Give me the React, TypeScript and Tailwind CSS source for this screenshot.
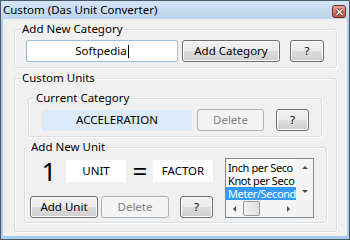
import React from "react";

function Button({
  children,
  className = "",
  disabled = false,
}: {
  children: React.ReactNode;
  className?: string;
  disabled?: boolean;
}) {
  return (
    <div
      className={`flex h-[22px] items-center justify-center rounded-[3px] border text-[11.5px] leading-none ${
        disabled
          ? "border-[#adb2b5] bg-[#f4f4f4] text-[#838383]"
          : "border-[#707070] bg-[linear-gradient(#f2f2f2_0%,#ebebeb_50%,#dddddd_50%,#cfcfcf_100%)] text-black shadow-[inset_0_0_0_1px_#fbfbfb]"
      } ${className}`}
    >
      {children}
    </div>
  );
}

function Group({
  label,
  className = "",
  children,
}: {
  label: string;
  className?: string;
  children: React.ReactNode;
}) {
  return (
    <fieldset
      className={`rounded-[3px] border border-[#d5dfe5] shadow-[1px_1px_0_#ffffff,inset_1px_1px_0_#ffffff] ${className}`}
    >
      <legend className="px-[2px] text-[11.5px] leading-[14px] text-black">{label}</legend>
      {children}
    </fieldset>
  );
}

function Arrow({ dir }: { dir: "up" | "down" | "left" | "right" }) {
  const pts =
    dir === "up"
      ? "1,5 4,2 7,5"
      : dir === "down"
      ? "1,2 4,5 7,2"
      : dir === "left"
      ? "5,1 2,4 5,7"
      : "3,1 6,4 3,7";
  return (
    <svg width="8" height="8" viewBox="0 0 8 8">
      <polygon points={pts} fill="#4d4d4d" />
    </svg>
  );
}

export default function App() {
  return (
    <div className="flex h-[240px] w-[350px] flex-col border border-[#4a5866] bg-[#a9cbec] font-['Segoe_UI','Noto_Sans',sans-serif]">
      {/* Title bar */}
      <div className="flex h-[18px] items-start bg-[linear-gradient(#d4e4f5,#bdd4ed)]">
        <div className="pl-[2px] text-[11.5px] leading-[18px] text-black">Custom (Das Unit Converter)</div>
        <div className="ml-auto mr-[3px] mt-[4px] flex h-[13px] w-[14px] items-center justify-center rounded-[3px] border border-[#6e2a22] bg-[linear-gradient(#e9a597,#c8513f)]">
          <svg width="9" height="8" viewBox="0 0 9 8">
            <path d="M1.5 1 L7.5 7 M7.5 1 L1.5 7" stroke="#5a1a12" strokeWidth="3" />
            <path d="M1.5 1 L7.5 7 M7.5 1 L1.5 7" stroke="#ffffff" strokeWidth="1.6" />
          </svg>
        </div>
      </div>

      {/* Client area */}
      <div className="mx-[2px] mb-[3px] flex flex-1 flex-col bg-[#f0f0f0] text-[11.5px] text-black">
        <Group label="Add New Category" className="ml-[11px] mt-[3px] w-[323px] pb-[5px] pl-[5px]">
          <div className="ml-[6px] mt-[4px] flex">
            <div className="flex h-[22px] w-[152px] items-center justify-center rounded-[2px] border border-[#9fbddf] bg-white">
              <span>Softpedia</span>
              <span className="ml-[1px] h-[13px] w-[1px] bg-black" />
            </div>
            <Button className="ml-[4px] w-[98px]">Add Category</Button>
            <Button className="ml-[10px] w-[34px]">?</Button>
          </div>
        </Group>

        <Group label="Custom Units" className="ml-[11px] mt-[3px] w-[323px] pb-[8px] pl-[5px]">
          <Group label="Current Category" className="ml-[8px] mt-[6px] w-[294px] pb-[5px] pl-[5px]">
            <div className="ml-[8px] mt-[4px] flex items-center">
              <div className="flex h-[21px] w-[150px] items-center justify-center bg-[#dcebfa]">ACCELERATION</div>
              <Button disabled className="ml-[5px] w-[67px]">
                Delete
              </Button>
              <Button className="ml-[12px] w-[33px]">?</Button>
            </div>
          </Group>

          <Group label="Add New Unit" className="ml-[4px] mt-[3px] w-[303px] pb-[4px] pl-[4px]">
            <div className="flex">
              <div className="mt-[6px] flex flex-col">
                <div className="flex h-[22px] items-center">
                  <div className="ml-[8px] w-[24px] text-center text-[26px] leading-[22px]">1</div>
                  <div className="ml-[5px] flex h-[22px] w-[60px] items-center justify-center bg-white">UNIT</div>
                  <div className="ml-[4px] w-[20px] text-center text-[26px] leading-[22px]">=</div>
                  <div className="ml-[3px] flex h-[22px] w-[60px] items-center justify-center bg-white">FACTOR</div>
                </div>
                <div className="mt-[14px] flex">
                  <Button className="ml-[1px] w-[68px]">Add Unit</Button>
                  <Button disabled className="ml-[3px] w-[68px]">
                    Delete
                  </Button>
                  <Button className="ml-[11px] w-[33px]">?</Button>
                </div>
              </div>

              {/* List box */}
              <div className="ml-[12px] mt-[4px] flex h-[60px] w-[89px] flex-col border border-[#828790] bg-white">
                <div className="flex h-[41px]">
                  <div className="w-[70px] overflow-hidden pt-[2px] text-[11px] leading-[13px] tracking-[-0.4px]">
                    <div className="h-[13px] overflow-hidden whitespace-nowrap pl-[2px]">Inch per Seco</div>
                    <div className="h-[13px] overflow-hidden whitespace-nowrap pl-[2px]">Knot per Seco</div>
                    <div className="h-[13px] overflow-hidden whitespace-nowrap bg-[#3399ff] pl-[2px] text-white">Meter/Second</div>
                  </div>
                  <div className="flex w-[17px] flex-col justify-between bg-[#f4f4f4]">
                    <div className="flex h-[17px] items-center justify-center">
                      <Arrow dir="up" />
                    </div>
                    <div className="flex h-[17px] items-center justify-center">
                      <Arrow dir="down" />
                    </div>
                  </div>
                </div>
                <div className="flex h-[17px]">
                  <div className="flex w-[70px] bg-[#f4f4f4]">
                    <div className="flex w-[17px] items-center justify-center">
                      <Arrow dir="left" />
                    </div>
                    <div className="flex flex-1 items-center">
                      <div className="h-[15px] w-[17px] rounded-[2px] border border-[#979797] bg-[linear-gradient(90deg,#f4f4f4,#e0e0e0)]" />
                    </div>
                    <div className="flex w-[17px] items-center justify-center">
                      <Arrow dir="right" />
                    </div>
                  </div>
                  <div className="w-[17px] bg-[#f0f0f0]" />
                </div>
              </div>
            </div>
          </Group>
        </Group>
      </div>
    </div>
  );
}
